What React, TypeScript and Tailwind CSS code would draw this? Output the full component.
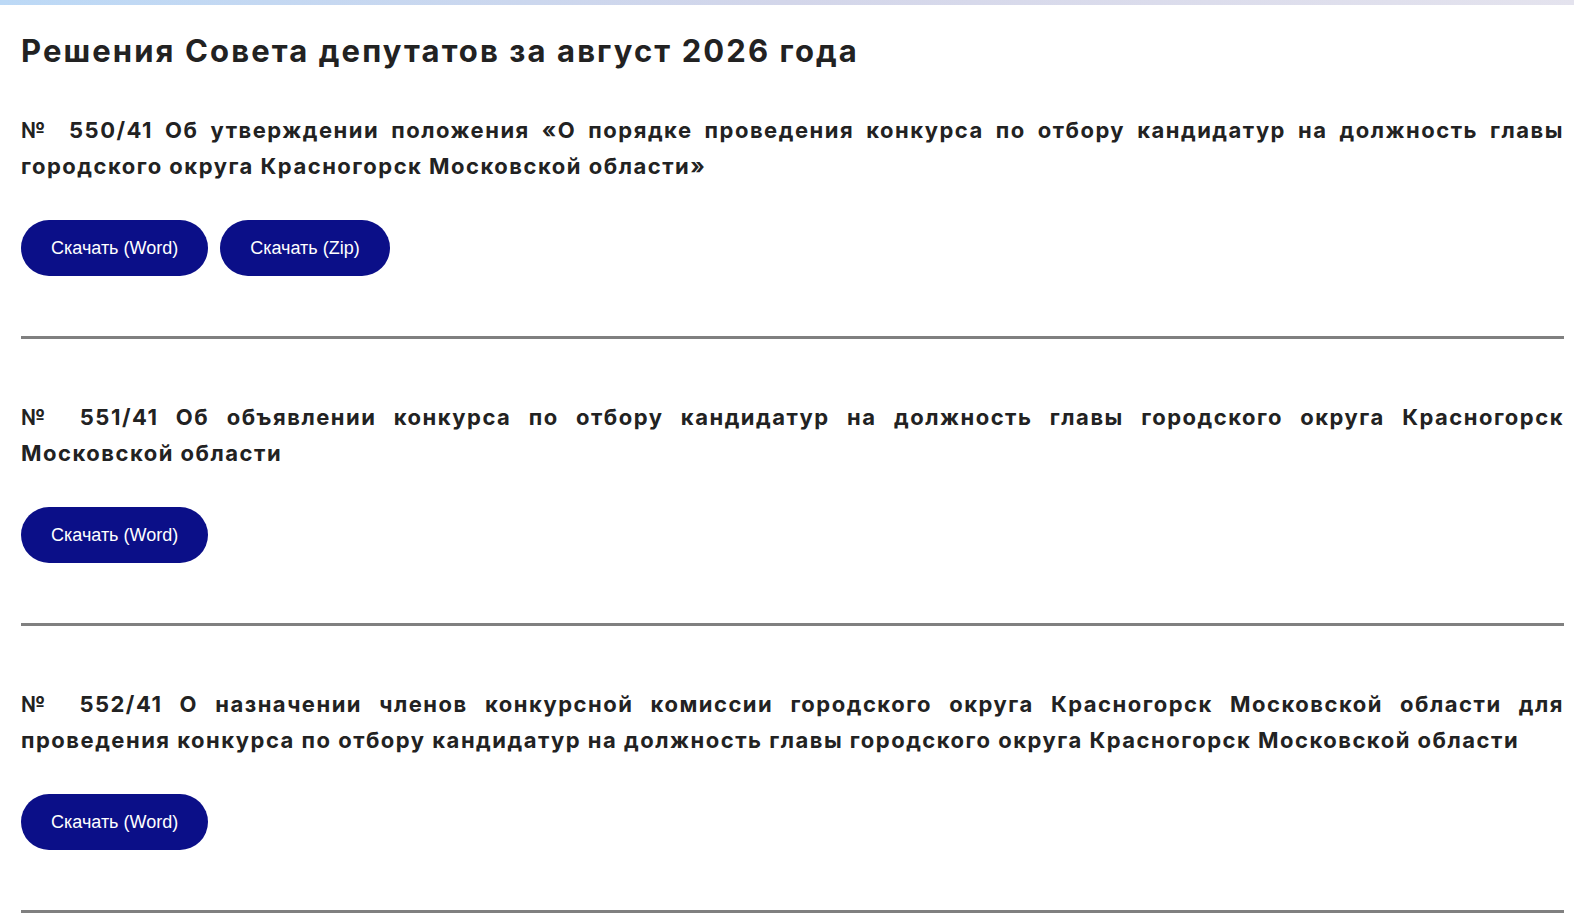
import type { ReactElement } from "react";

type Decision = {
  number: string;
  title: string;
  files: string[];
};

const decisions: Decision[] = [
  {
    number: "550/41",
    title:
      "Об утверждении положения «О порядке проведения конкурса по отбору кандидатур на должность главы городского округа Красногорск Московской области»",
    files: ["Word", "Zip"],
  },
  {
    number: "551/41",
    title:
      "Об объявлении конкурса по отбору кандидатур на должность главы городского округа Красногорск Московской области",
    files: ["Word"],
  },
  {
    number: "552/41",
    title:
      "О назначении членов конкурсной комиссии городского округа Красногорск Московской области для проведения конкурса по отбору кандидатур на должность главы городского округа Красногорск Московской области",
    files: ["Word"],
  },
];

function DownloadButton({ kind }: { kind: string }): ReactElement {
  return (
    <a
      href="#"
      className="inline-flex h-14 items-center rounded-full bg-[#0b0f88] px-[30px] font-['Liberation_Sans',Arial,sans-serif] text-[18px] text-white"
    >
      Скачать ({kind})
    </a>
  );
}

export default function App() {
  return (
    <div className="min-h-screen bg-white font-['Inter','Liberation_Sans',sans-serif] text-[#222]">
      <div className="h-[5px] bg-gradient-to-r from-[#bcd9f6] via-[#d3d6ea] to-[#e4e3ee]" />

      <main className="pl-[21px] pr-[10px]">
        <h1 className="mt-[26px] text-[31px] font-bold leading-10 tracking-[2.1px]">
          Решения Совета депутатов за август 2026 года
        </h1>

        <div>
          {decisions.map((item) => (
            <section
              key={item.number}
              className="border-b-[3px] border-[#808080] pb-[60px] pt-[60px] first:pt-[41px]"
            >
              <p className="text-justify text-[22px] font-bold leading-9 tracking-[1.5px]">
                {`№\u2009 ${item.number} ${item.title}`}
              </p>
              <div className="mt-9 flex gap-3">
                {item.files.map((kind) => (
                  <DownloadButton key={kind} kind={kind} />
                ))}
              </div>
            </section>
          ))}
        </div>
      </main>
    </div>
  );
}
